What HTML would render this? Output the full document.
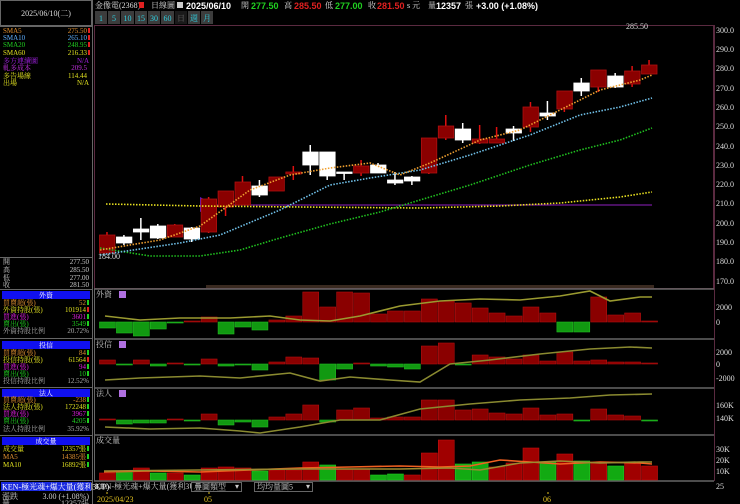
<!DOCTYPE html>
<html><head><meta charset="utf-8"><style>
body{margin:0;background:#000;width:740px;height:504px;overflow:hidden;font-family:"Liberation Sans","Noto Sans CJK TC",sans-serif}
svg{position:absolute;left:0;top:0}
text{font-family:"Liberation Serif","Noto Serif CJK SC",serif;font-size:8px}
.l text{font-size:7px}
.b{font-family:"Liberation Sans","Noto Sans CJK TC",sans-serif;font-weight:bold;font-size:9px}
</style></head><body>
<svg id="s" width="740" height="504" xmlns="http://www.w3.org/2000/svg">
<rect width="740" height="504" fill="#000"/>
<rect x="0.5" y="0.5" width="91" height="25" fill="none" stroke="#666"/>
<line x1="92.5" y1="0" x2="92.5" y2="504" stroke="#666"/>
<line x1="0" y1="26.5" x2="92" y2="26.5" stroke="#666"/>
<line x1="0" y1="257.5" x2="92" y2="257.5" stroke="#666"/>
<text x="46" y="16" fill="#ddd" text-anchor="middle" font-size="7.5">2025/06/10(二)</text>
<g class="l">
<text x="3" y="33" fill="#e09030">SMA5</text><text x="87" y="33" fill="#e09030" text-anchor="end">275.50</text>
<text x="3" y="40" fill="#60b0ff">SMA10</text><text x="87" y="40" fill="#60b0ff" text-anchor="end">265.10</text>
<text x="3" y="47" fill="#20d020">SMA20</text><text x="87" y="47" fill="#20d020" text-anchor="end">248.95</text>
<text x="3" y="55" fill="#e0e020">SMA60</text><text x="87" y="55" fill="#e0e020" text-anchor="end">216.33</text>
<text x="3" y="63" fill="#a020e0">多方連續圖</text><text x="89" y="63" fill="#a020e0" text-anchor="end">N/A</text>
<text x="3" y="70" fill="#c030e0">軋多成本</text><text x="87" y="70" fill="#c030e0" text-anchor="end">209.5</text>
<text x="3" y="78" fill="#e0e020">多告場線</text><text x="87" y="78" fill="#e0e020" text-anchor="end">114.44</text>
<text x="3" y="85" fill="#e0e020">出場</text><text x="89" y="85" fill="#e0e020" text-anchor="end">N/A</text>
<g fill="#e02020"><rect x="88" y="28" width="2" height="5"/><rect x="88" y="35" width="2" height="5"/><rect x="88" y="42" width="2" height="5"/><rect x="88" y="50" width="2" height="5"/></g>
<g fill="#ccc">
<text x="3" y="264">開</text><text x="89" y="264" text-anchor="end">277.50</text>
<text x="3" y="272">高</text><text x="89" y="272" text-anchor="end">285.50</text>
<text x="3" y="280">低</text><text x="89" y="280" text-anchor="end">277.00</text>
<text x="3" y="287">收</text><text x="89" y="287" text-anchor="end">281.50</text>
</g>
<rect x="2" y="291" width="88" height="8" fill="#1010f0"/><text x="46" y="297.5" fill="#fff" text-anchor="middle">外資</text>
<text x="3" y="305" fill="#e09030">買賣超(張)</text><text x="86" y="305" fill="#e09030" text-anchor="end">52</text>
<text x="3" y="312" fill="#e0e020">外資持股(張)</text><text x="86" y="312" fill="#e0e020" text-anchor="end">101914</text>
<text x="3" y="319" fill="#e020e0">買進(張)</text><text x="86" y="319" fill="#e020e0" text-anchor="end">3601</text>
<text x="3" y="326" fill="#20d020">賣出(張)</text><text x="86" y="326" fill="#20d020" text-anchor="end">3549</text>
<text x="3" y="333" fill="#aaa">外資持股比例</text><text x="89" y="333" fill="#aaa" text-anchor="end">20.72%</text>
<rect x="2" y="341" width="88" height="8" fill="#1010f0"/><text x="46" y="347.5" fill="#fff" text-anchor="middle">投信</text>
<text x="3" y="355" fill="#e09030">買賣超(張)</text><text x="86" y="355" fill="#e09030" text-anchor="end">84</text>
<text x="3" y="362" fill="#e0e020">投信持股(張)</text><text x="86" y="362" fill="#e0e020" text-anchor="end">61564</text>
<text x="3" y="369" fill="#e020e0">買進(張)</text><text x="86" y="369" fill="#e020e0" text-anchor="end">94</text>
<text x="3" y="376" fill="#20d020">賣出(張)</text><text x="86" y="376" fill="#20d020" text-anchor="end">10</text>
<text x="3" y="383" fill="#aaa">投信持股比例</text><text x="89" y="383" fill="#aaa" text-anchor="end">12.52%</text>
<rect x="2" y="389" width="88" height="8" fill="#1010f0"/><text x="46" y="395.5" fill="#fff" text-anchor="middle">法人</text>
<text x="3" y="402" fill="#e09030">買賣超(張)</text><text x="86" y="402" fill="#e09030" text-anchor="end">-238</text>
<text x="3" y="409" fill="#e0e020">法人持股(張)</text><text x="86" y="409" fill="#e0e020" text-anchor="end">172248</text>
<text x="3" y="416" fill="#e020e0">買進(張)</text><text x="86" y="416" fill="#e020e0" text-anchor="end">3967</text>
<text x="3" y="423" fill="#20d020">賣出(張)</text><text x="86" y="423" fill="#20d020" text-anchor="end">4205</text>
<text x="3" y="431" fill="#aaa">法人持股比例</text><text x="89" y="431" fill="#aaa" text-anchor="end">35.92%</text>
<rect x="2" y="437" width="88" height="8" fill="#1010f0"/><text x="46" y="443.5" fill="#fff" text-anchor="middle">成交量</text>
<text x="3" y="451" fill="#e0e020">成交量</text><text x="86" y="451" fill="#e0e020" text-anchor="end">12357張</text>
<text x="3" y="459" fill="#e09030">MA5</text><text x="86" y="459" fill="#e09030" text-anchor="end">14385張</text>
<text x="3" y="467" fill="#e0e020">MA10</text><text x="86" y="467" fill="#e0e020" text-anchor="end">16892張</text>
</g>
<g fill="#20d020">
<rect x="87" y="300" width="2" height="5"/><rect x="87" y="314" width="2" height="5"/><rect x="87" y="321" width="2" height="5"/>
<rect x="87" y="350" width="2" height="5"/><rect x="87" y="364" width="2" height="5"/><rect x="87" y="371" width="2" height="5"/>
<rect x="87" y="397" width="2" height="5"/><rect x="87" y="404" width="2" height="5"/><rect x="87" y="411" width="2" height="5"/><rect x="87" y="418" width="2" height="5"/>
<rect x="87" y="446" width="2" height="5"/><rect x="87" y="454" width="2" height="5"/><rect x="87" y="462" width="2" height="5"/>
</g>
<g fill="#e02020"><rect x="87" y="307" width="2" height="5"/><rect x="87" y="357" width="2" height="5"/></g>
<line x1="0" y1="289.5" x2="92" y2="289.5" stroke="#666"/>
<line x1="0" y1="338.5" x2="92" y2="338.5" stroke="#666"/>
<line x1="0" y1="387.5" x2="92" y2="387.5" stroke="#666"/>
<line x1="0" y1="435.5" x2="92" y2="435.5" stroke="#666"/>
<line x1="0" y1="480.5" x2="92" y2="480.5" stroke="#666"/>
<rect x="1" y="482" width="90" height="9" fill="#1a2ae0"/><text x="2" y="489.5" fill="#fff" font-size="6">KEN-極光魂+爆大量(獲利3UP)</text>
<text x="2" y="499" fill="#ccc" font-size="7">漲跌</text><text x="89" y="499" fill="#ccc" text-anchor="end" font-size="7">3.00 (+1.08%)</text>
<text x="2" y="506" fill="#ccc" font-size="7">量</text><text x="89" y="506" fill="#ccc" text-anchor="end" font-size="7">12357張</text>

<!-- header -->
<text x="95" y="8" fill="#ddd" font-size="7">金像電(2368)</text>
<rect x="139" y="2" width="5" height="6" fill="#e02020"/>
<text x="151" y="8" fill="#ddd" font-size="7">日線圖</text>
<rect x="177" y="2" width="6" height="6" fill="#ccc"/>
<text x="186" y="9" class="b" fill="#fff">2025/06/10</text>
<text x="241" y="8" fill="#ddd" font-size="7">開</text><text x="251" y="9" class="b" fill="#20d020">277.50</text>
<text x="284" y="8" fill="#ddd" font-size="7">高</text><text x="294" y="9" class="b" fill="#e02020">285.50</text>
<text x="325" y="8" fill="#ddd" font-size="7">低</text><text x="335" y="9" class="b" fill="#20d020">277.00</text>
<text x="368" y="8" fill="#ddd" font-size="7">收</text><text x="377" y="9" class="b" fill="#e02020">281.50</text>
<text x="407" y="8" fill="#ddd" font-size="7">s 元</text>
<text x="428" y="8" fill="#ddd" font-size="7">量</text><text x="436" y="9" class="b" fill="#fff">12357</text>
<text x="465" y="8" fill="#ddd" font-size="7">張</text>
<text x="476" y="9" class="b" fill="#fff">+3.00 (+1.08%)</text>
<g>
<rect x="95" y="11" width="12" height="13" fill="#3c3c3c"/><rect x="108" y="11" width="12" height="13" fill="#3c3c3c"/>
<rect x="121" y="11" width="13" height="13" fill="#3c3c3c"/><rect x="135" y="11" width="12" height="13" fill="#3c3c3c"/>
<rect x="148" y="11" width="12" height="13" fill="#3c3c3c"/><rect x="161" y="11" width="13" height="13" fill="#3c3c3c"/>
<rect x="175" y="11" width="12" height="13" fill="#1a1a1a"/><rect x="188" y="11" width="12" height="13" fill="#3c3c3c"/>
<rect x="201" y="11" width="12" height="13" fill="#3c3c3c"/>
</g>
<g fill="#30d0e0" font-size="8" text-anchor="middle">
<text x="101" y="21">1</text><text x="114" y="21">5</text><text x="127.5" y="21">10</text><text x="141" y="21">15</text>
<text x="154" y="21">30</text><text x="167.5" y="21">60</text><text x="181" y="21" fill="#666" font-size="7">日</text><text x="194" y="21" font-size="7">週</text><text x="207" y="21" font-size="7">月</text>
</g>
<rect x="94.5" y="25.5" width="619" height="263" fill="none" stroke="#5a2a40"/>
<line x1="714.5" y1="25" x2="714.5" y2="481" stroke="#5a2a40"/>
<line x1="94" y1="289" x2="714" y2="289" stroke="#666" stroke-width="1.5"/>
<line x1="94" y1="339" x2="714" y2="339" stroke="#666" stroke-width="1.5"/>
<line x1="94" y1="388" x2="714" y2="388" stroke="#666" stroke-width="1.5"/>
<line x1="94" y1="435" x2="714" y2="435" stroke="#666" stroke-width="1.5"/>
<line x1="94" y1="481" x2="714" y2="481" stroke="#666" stroke-width="1.5"/>
<line x1="94.5" y1="289" x2="94.5" y2="481" stroke="#666"/>
<rect x="206" y="285" width="448" height="3" fill="#3a2a20"/>
<g fill="#ddd" font-size="8">
<text x="716" y="33">300.0</text><text x="716" y="52">290.0</text><text x="716" y="71">280.0</text><text x="716" y="91">270.0</text>
<text x="716" y="110">260.0</text><text x="716" y="129">250.0</text><text x="716" y="149">240.0</text><text x="716" y="168">230.0</text>
<text x="716" y="187">220.0</text><text x="716" y="206">210.0</text><text x="716" y="226">200.0</text><text x="716" y="245">190.0</text>
<text x="716" y="264">180.0</text><text x="716" y="284">170.0</text>
<text x="716" y="310">2000</text><text x="716" y="325">0</text>
<text x="716" y="355">2000</text><text x="716" y="367">0</text><text x="716" y="381">-2000</text>
<text x="716" y="408">160K</text><text x="716" y="421">140K</text>
<text x="716" y="452">30K</text><text x="716" y="463">20K</text><text x="716" y="474">10K</text><text x="716" y="489">25</text>
</g>
<text x="96" y="297" fill="#ccc" font-size="7">外資</text><rect x="119" y="291" width="7" height="7" fill="#b070e0"/>
<text x="96" y="347" fill="#ccc" font-size="7">投信</text><rect x="119" y="341" width="7" height="7" fill="#b070e0"/>
<text x="96" y="396" fill="#ccc" font-size="7">法人</text><rect x="119" y="390" width="7" height="7" fill="#b070e0"/>
<text x="96" y="443" fill="#ccc" font-size="7">成交量</text>
<text x="95" y="489" fill="#ccc" font-size="6">KEN-極光魂+爆大量(獲利3UP)</text>
<rect x="191.5" y="482.5" width="50" height="9" fill="#000" stroke="#666"/><text x="194" y="489.5" fill="#ccc" font-size="6">疊圖類型</text><text x="239" y="489" fill="#ccc" font-size="6" text-anchor="end">▾</text>
<rect x="254.5" y="482.5" width="58" height="9" fill="#000" stroke="#666"/><text x="257" y="489.5" fill="#ccc" font-size="6">均均量圖5</text><text x="310" y="489" fill="#ccc" font-size="6" text-anchor="end">▾</text>
<g fill="#e0c020" font-size="8"><text x="97" y="502">2025/04/23</text><text x="204" y="502">05</text><text x="543" y="502">06</text></g>
<g stroke="#e0c020"><line x1="107" y1="492" x2="107" y2="494"/><line x1="209" y1="492" x2="209" y2="494"/><line x1="548" y1="492" x2="548" y2="494"/></g>
<g id="dyn"></g>
<text x="626" y="29" fill="#ddd" font-size="8">285.50</text>
<text x="98" y="259" fill="#ddd" font-size="8">184.00</text>
</svg>
<script>
var g=document.getElementById('dyn'),NS='http://www.w3.org/2000/svg';
function el(t,a){var e=document.createElementNS(NS,t);for(var k in a)e.setAttribute(k,a[k]);g.appendChild(e);return e;}
var X0=99,W=16.94;
el('line',{x1:200,y1:205,x2:652,y2:205,stroke:'#9020c0','stroke-width':1});
el('polygon',{points:'200,197 215,205 200,212',fill:'#5a1ad0'});
var C=[['r',235,253,232,253],['w',237,243,235,245],['w',229,232,218,240],['w',226,238,224,239],['r',225,237,224,237],['w',228,239,227,242],
['r',199,232,197,233],['r',191,207,191,216],['r',182,205,176,205],['w',186,195,180,197],['r',177,191,177,191],['r',172,174,166,180],
['w',152,165,145,175],['w',152,176,152,180],['w',172,173,172,180],['r',166,173,160,176],['w',165,173,163,173],['w',180,183,172,185],
['w',177,181,176,185],['r',138,173,138,174],['r',126,138,115,140],['w',129,140,123,143],['r',139,143,125,144],['r',139,143,127,143],
['w',129,133,126,141],['r',107,127,102,132],['w',113,116,101,120],['r',91,109,91,112],['w',83,91,78,96],['r',70,87,70,92],
['w',76,87,73,88],['r',71,84,66,87],['r',65,74,60,74]];
C.forEach(function(c,i){var x=X0+i*W,cx=x+W/2-.5;
 var col=c[0]=='r'?'#e01010':'#fff';
 el('line',{x1:cx,y1:c[3],x2:cx,y2:c[4],stroke:col,'stroke-width':1.5});
 var h=Math.max(1.5,c[2]-c[1]);
 el('rect',{x:x+.5,y:c[1],width:W-1.5,height:h,fill:c[0]=='r'?'#8a0000':'#fff',stroke:c[0]=='r'?'#b01010':'#fff','stroke-width':.8});
});
function pl(pts,col,dash){el('polyline',{points:pts,fill:'none',stroke:col,'stroke-width':1.6,'stroke-dasharray':dash||'1.5,1.5'});}
pl('106,204 200,206 300,207 420,208 500,206 560,203 620,197 652,192','#e8e020');
pl('100,248 150,256 200,256 240,250 280,238 330,224 380,212 420,200 470,185 530,165 580,150 620,140 652,128','#20c020');
pl('100,255 180,243 220,235 280,210 330,185 370,178 420,170 470,155 530,135 580,115 620,107 652,98','#70c0e8');
pl('100,250 160,240 200,226 250,190 290,175 330,168 370,163 400,175 430,163 480,140 520,130 560,110 600,90 640,80 652,75','#f0a030');
function bars(zero,arr){arr.forEach(function(v,i){var x=X0+i*W;var y=v<0?zero+v:zero,h=Math.max(1,Math.abs(v));
 el('rect',{x:x+.5,y:y,width:W-1,height:h,fill:v<0?'#8a0000':'#119911',stroke:v<0?'#b01010':'#22bb22','stroke-width':.6});});}
bars(322,[6,11,14,7,1,-1,-5,12,5,8,-2,-6,-30,-15,-30,-29,-8,-11,-11,-23,-21,-19,-14,-9,-6,-15,-9,10,10,-25,-7,-9,-1]);
bars(364,[-4,1,-4,2,-1,1,-5,2,1,6,-2,-7,-6,16,5,-1,2,3,5,-18,-21,1,-9,-7,-5,-9,-3,-12,-3,-4,-2,-2,-1]);
bars(420,[-1,4,3,3,-1,1,-6,5,2,7,-3,-6,-15,2,-10,-12,-2,-3,-3,-20,-20,-10,-11,-7,-6,-12,-5,-6,1,-11,-5,-4,1]);
pl('105,316 140,320 180,318 230,318 270,316 300,320 330,321 360,316 400,306 440,301 480,299 520,300 560,296 590,291 610,301 640,297 652,297','#9a9a30','0');
pl('105,380 140,378 200,376 240,378 290,373 320,381 350,377 390,380 420,382 450,364 490,360 540,354 590,349 630,347 652,348','#8a8a30','0');
pl('105,427 150,429 200,428 240,431 260,433 300,427 340,420 380,420 420,409 470,404 520,400 570,398 610,395 652,394','#8a8a30','0');
var vt=[473,471,468,473,473,475,468,467,468,471,470,470,462,465,469,469,475,474,475,453,440,464,462,467,463,448,462,454,461,463,466,463,466];
var vcol=['r','g','r','g','r','g','r','r','r','g','r','r','r','g','r','r','g','g','r','r','r','g','g','r','r','r','g','r','g','r','g','r','r'];
vt.forEach(function(y,i){var x=X0+i*W;var r=vcol[i]=='r';el('rect',{x:x+.5,y:y,width:W-1,height:480-y,fill:r?'#a00000':'#12aa12',stroke:r?'#c01010':'#22cc22','stroke-width':.6});});
pl('104,472 150,471 200,472 250,470 300,468 350,467 400,466 440,467 470,466 500,460 530,462 560,464 600,462 640,463 652,464','#f06020','0');
pl('104,471 200,470 300,469 400,469 450,468 480,470 520,463 560,461 600,463 640,462 652,462','#9a8a30','0');
</script>
</body></html>
